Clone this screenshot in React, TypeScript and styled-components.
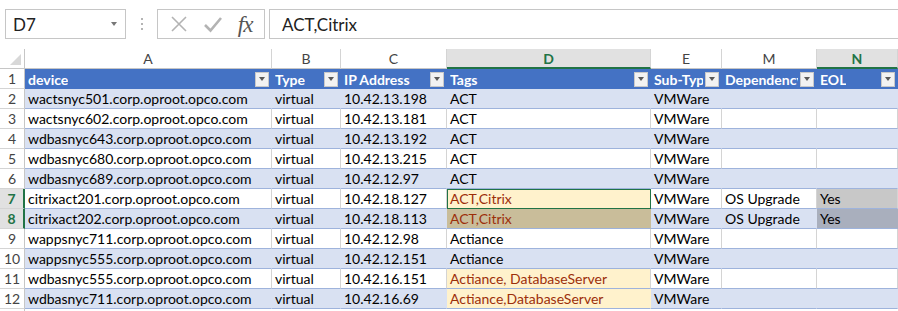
import React from 'react';
import styled, { createGlobalStyle, css } from 'styled-components';

const GlobalStyle = createGlobalStyle`
  html, body {
    margin: 0;
    padding: 0;
    background: #ffffff;
  }
  body {
    font-family: Lato, 'Open Sans', 'Liberation Sans', Arial, sans-serif;
    overflow: hidden;
  }
`;

const cellFont = `Lato, 'Open Sans', 'Liberation Sans', Arial, sans-serif`;
const green = '#217346';

const Page = styled.div`
  width: 898px;
  height: 311px;
  overflow: hidden;
  display: flex;
  flex-direction: column;
`;

/* ---------- formula bar ---------- */

const FormulaBar = styled.div`
  flex: none;
  height: 49px;
  display: flex;
  align-items: flex-start;
  padding: 9px 0 0 5px;
  box-sizing: border-box;
`;

const NameBox = styled.div`
  width: 121px;
  height: 30px;
  border: 1px solid #c6c6c6;
  box-sizing: border-box;
  display: flex;
  align-items: center;
  justify-content: space-between;
  padding: 0 8px 0 7px;
  font-family: ${cellFont};
  font-size: 17px;
  color: #222;
`;

const SmallArrow = styled.span`
  width: 0;
  height: 0;
  border-left: 3px solid transparent;
  border-right: 3px solid transparent;
  border-top: 4px solid #777;
`;

const Dots = styled.div`
  width: 31px;
  height: 30px;
  display: flex;
  flex-direction: column;
  align-items: center;
  justify-content: center;
  gap: 3px;
  span {
    width: 2px;
    height: 2px;
    background: #b4b4b4;
  }
`;

const FxGroup = styled.div`
  width: 108px;
  height: 30px;
  border: 1px solid #c6c6c6;
  box-sizing: border-box;
  display: flex;
  align-items: center;
  justify-content: space-around;
  padding: 0 4px;
`;

const FxLabel = styled.span`
  font-family: 'Liberation Serif', 'DejaVu Serif', serif;
  font-style: italic;
  font-size: 23px;
  color: #555;
  letter-spacing: -1px;
  line-height: 1;
`;

const FormulaInput = styled.div`
  flex: 1;
  margin-left: 4px;
  height: 30px;
  border: 1px solid #c6c6c6;
  border-right: none;
  box-sizing: border-box;
  display: flex;
  align-items: center;
  padding-left: 12px;
  font-family: ${cellFont};
  font-size: 17px;
  color: #222;
`;

/* ---------- grid ---------- */

const Sheet = styled.div`
  flex: none;
  display: grid;
  grid-template-columns: 25px 247px 69px 106px 204px 71px 95px 81px;
  grid-auto-rows: 20px;
  font-family: ${cellFont};
  font-size: 14px;
`;

const Corner = styled.div`
  border-right: 1px solid #c6c6c6;
  border-bottom: 1px solid #c6c6c6;
  box-sizing: border-box;
  position: relative;
  &::after {
    content: '';
    position: absolute;
    right: 3px;
    bottom: 3px;
    border-left: 11px solid transparent;
    border-bottom: 11px solid #d8d8d8;
  }
`;

const ColHead = styled.div<{ $active?: boolean }>`
  box-sizing: border-box;
  border-right: 1px solid #d4d4d4;
  border-bottom: 1px solid #c6c6c6;
  display: flex;
  align-items: center;
  justify-content: center;
  font-size: 14px;
  color: #444;
  ${(p) =>
    p.$active &&
    css`
      background: #e1e1e1;
      color: ${green};
      font-weight: 700;
      border-bottom: 2px solid ${green};
    `}
`;

const RowHead = styled.div<{ $active?: boolean }>`
  box-sizing: border-box;
  border-right: 1px solid #c6c6c6;
  border-bottom: 1px solid #d4d4d4;
  display: flex;
  align-items: flex-end;
  justify-content: center;
  padding-bottom: 1px;
  font-size: 14px;
  color: #444;
  ${(p) =>
    p.$active &&
    css`
      background: #e1e1e1;
      color: ${green};
      font-weight: 700;
      border-right: 2px solid ${green};
    `}
`;

const HeaderCell = styled.div`
  box-sizing: border-box;
  background: #4472c4;
  color: #fff;
  font-weight: 700;
  display: flex;
  align-items: center;
  justify-content: space-between;
  padding: 0 3px 0 3px;
  white-space: nowrap;
  overflow: hidden;
  span {
    overflow: hidden;
  }
`;

const FilterButton = styled.span`
  flex: none;
  width: 14px;
  height: 15px;
  margin-left: 2px;
  box-sizing: border-box;
  border: 1px solid #c8c8c8;
  background: #f2f2f2;
  display: flex;
  align-items: center;
  justify-content: center;
  &::after {
    content: '';
    border-left: 3.5px solid transparent;
    border-right: 3.5px solid transparent;
    border-top: 4px solid #595959;
  }
`;

type Tone = 'plain' | 'band' | 'warn' | 'active' | 'selWarn' | 'selPlain' | 'selBand';

const fills: Record<Tone, string> = {
  plain: '#ffffff',
  band: '#d9e1f2',
  warn: '#fff2cc',
  active: '#fff2cc',
  selWarn: '#c9bd9a',
  selPlain: '#c8c8c8',
  selBand: '#a9afbd',
};

const Cell = styled.div<{ $tone: Tone; $warnText?: boolean; $band: boolean }>`
  box-sizing: border-box;
  background: ${(p) => fills[p.$tone]};
  color: ${(p) => (p.$warnText ? '#9c2f0a' : '#000')};
  border-bottom: 1px solid #9eb3dc;
  border-right: 1px solid ${(p) => (p.$band ? 'transparent' : '#d4d4d4')};
  display: flex;
  align-items: flex-end;
  padding: 0 3px 1px 3px;
  white-space: nowrap;
  overflow: hidden;
  ${(p) =>
    p.$tone === 'active' &&
    css`
      border: 1px solid ${green};
      padding-left: 2px;
    `}
`;

const headers = ['device', 'Type', 'IP Address', 'Tags', 'Sub-Type', 'Dependency', 'EOL'];
const letters = ['A', 'B', 'C', 'D', 'E', 'M', 'N'];

type Row = [string, string, string, string, string, string, string];

const rows: Row[] = [
  ['wactsnyc501.corp.oproot.opco.com', 'virtual', '10.42.13.198', 'ACT', 'VMWare', '', ''],
  ['wactsnyc602.corp.oproot.opco.com', 'virtual', '10.42.13.181', 'ACT', 'VMWare', '', ''],
  ['wdbasnyc643.corp.oproot.opco.com', 'virtual', '10.42.13.192', 'ACT', 'VMWare', '', ''],
  ['wdbasnyc680.corp.oproot.opco.com', 'virtual', '10.42.13.215', 'ACT', 'VMWare', '', ''],
  ['wdbasnyc689.corp.oproot.opco.com', 'virtual', '10.42.12.97', 'ACT', 'VMWare', '', ''],
  ['citrixact201.corp.oproot.opco.com', 'virtual', '10.42.18.127', 'ACT,Citrix', 'VMWare', 'OS Upgrade', 'Yes'],
  ['citrixact202.corp.oproot.opco.com', 'virtual', '10.42.18.113', 'ACT,Citrix', 'VMWare', 'OS Upgrade', 'Yes'],
  ['wappsnyc711.corp.oproot.opco.com', 'virtual', '10.42.12.98', 'Actiance', 'VMWare', '', ''],
  ['wappsnyc555.corp.oproot.opco.com', 'virtual', '10.42.12.151', 'Actiance', 'VMWare', '', ''],
  ['wdbasnyc555.corp.oproot.opco.com', 'virtual', '10.42.16.151', 'Actiance, DatabaseServer', 'VMWare', '', ''],
  ['wdbasnyc711.corp.oproot.opco.com', 'virtual', '10.42.16.69', 'Actiance,DatabaseServer', 'VMWare', '', ''],
];

function toneFor(rowNum: number, col: number): Tone {
  const band = rowNum % 2 === 0;
  if (col === 3) {
    if (rowNum === 7) return 'active';
    if (rowNum === 8) return 'selWarn';
    if (rowNum === 11 || rowNum === 12) return 'warn';
  }
  if (col === 6 && (rowNum === 7 || rowNum === 8)) return band ? 'selBand' : 'selPlain';
  return band ? 'band' : 'plain';
}

function CancelIcon() {
  return (
    <svg width="18" height="18" viewBox="0 0 18 18">
      <path d="M2 2 L16 16 M16 2 L2 16" stroke="#b3b3b3" strokeWidth="1.6" fill="none" />
    </svg>
  );
}

function CheckIcon() {
  return (
    <svg width="20" height="18" viewBox="0 0 20 18">
      <path d="M2 10 L7.5 15.5 L18 3" stroke="#b3b3b3" strokeWidth="2.6" fill="none" />
    </svg>
  );
}

export default function App() {
  return (
    <Page>
      <GlobalStyle />
      <FormulaBar>
        <NameBox>
          D7
          <SmallArrow />
        </NameBox>
        <Dots>
          <span />
          <span />
          <span />
        </Dots>
        <FxGroup>
          <CancelIcon />
          <CheckIcon />
          <FxLabel>fx</FxLabel>
        </FxGroup>
        <FormulaInput>ACT,Citrix</FormulaInput>
      </FormulaBar>

      <Sheet>
        <Corner />
        {letters.map((l) => (
          <ColHead key={l} $active={l === 'D' || l === 'N'}>
            {l}
          </ColHead>
        ))}

        <RowHead>1</RowHead>
        {headers.map((h) => (
          <HeaderCell key={h}>
            <span>{h}</span>
            <FilterButton />
          </HeaderCell>
        ))}

        {rows.map((row, i) => {
          const rowNum = i + 2;
          const band = rowNum % 2 === 0;
          return (
            <React.Fragment key={rowNum}>
              <RowHead $active={rowNum === 7 || rowNum === 8}>{rowNum}</RowHead>
              {row.map((value, c) => (
                <Cell
                  key={c}
                  $tone={toneFor(rowNum, c)}
                  $band={band}
                  $warnText={c === 3 && (rowNum === 7 || rowNum === 8 || rowNum >= 11)}
                >
                  {value}
                </Cell>
              ))}
            </React.Fragment>
          );
        })}
        <RowHead />
      </Sheet>
    </Page>
  );
}
